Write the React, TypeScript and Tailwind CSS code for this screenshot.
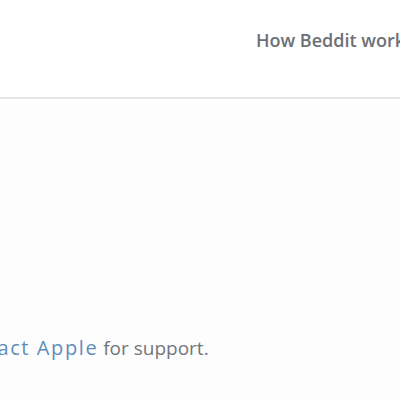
export default function App() {
  return (
    <div className="w-[400px] h-[400px] overflow-hidden bg-white flex flex-col" style={{ fontFamily: "'Open Sans', 'Liberation Sans', sans-serif" }}>
      <header className="h-[99px] shrink-0 bg-white border-b-2 border-[#e6e6e6] flex items-start">
        <nav className="pt-[27px] pl-[256px] whitespace-nowrap">
          <a className="text-[18px] font-semibold text-[#6c7077]">How Beddit works</a>
        </nav>
      </header>
      <main className="flex-1 pt-[234px] bg-[#fdfdfd]">
        <p className="whitespace-nowrap ml-[-53px] text-[19px] text-[#72767c]">
          <a className="text-[#5e8ebb] text-[20px] tracking-[1.6px]">Contact Apple</a> for support.
        </p>
      </main>
    </div>
  );
}
